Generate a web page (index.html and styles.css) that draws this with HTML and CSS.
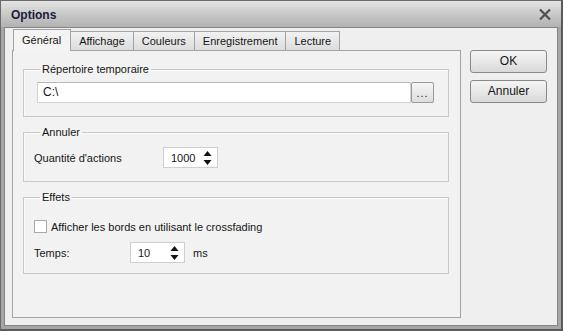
FILE: index.html
```html
<!DOCTYPE html>
<html>

<head>
    <meta charset="utf-8">
    <title>Options</title>

    <link rel="stylesheet" href="styles.css">
</head>

<body>

    <div class="window">
        <div class="titlebar">
            <span class="title">Options</span>
            <svg class="close" width="14" height="13" viewBox="0 0 14 13">
                <path d="M2 1.5 L12 11.5 M12 1.5 L2 11.5" stroke="#505050" stroke-width="2.2" fill="none" />
            </svg>
        </div>

        <div class="client">
            <div class="tabs-area">
                <div class="tabstrip">
                    <div class="tab active">Général</div>
                    <div class="tab">Affichage</div>
                    <div class="tab">Couleurs</div>
                    <div class="tab">Enregistrement</div>
                    <div class="tab">Lecture</div>
                </div>

                <div class="panel">
                    <fieldset class="group group-dir">
                        <legend>Répertoire temporaire</legend>
                        <div class="path-row">
                            <div class="path">C:\</div>
                            <div class="browse">...</div>
                        </div>
                    </fieldset>

                    <fieldset class="group group-undo">
                        <legend>Annuler</legend>
                        <div class="row">
                            <span class="label label-wide">Quantité d'actions</span>
                            <div class="spin">
                                <span class="spin-value">1000</span>
                                <svg class="spin-arrows" width="9" height="16" viewBox="0 0 9 16">
                                    <path d="M4.5 1 L8.5 6 L0.5 6 Z M0.5 10 L8.5 10 L4.5 15 Z" fill="#111" />
                                </svg>
                            </div>
                        </div>
                    </fieldset>

                    <fieldset class="group group-fx">
                        <legend>Effets</legend>
                        <div class="check-row">
                            <span class="checkbox"></span>
                            <span>Afficher les bords en utilisant le crossfading</span>
                        </div>
                        <div class="row">
                            <span class="label label-short">Temps:</span>
                            <div class="spin">
                                <span class="spin-value">10</span>
                                <svg class="spin-arrows" width="9" height="16" viewBox="0 0 9 16">
                                    <path d="M4.5 1 L8.5 6 L0.5 6 Z M0.5 10 L8.5 10 L4.5 15 Z" fill="#111" />
                                </svg>
                            </div>
                            <span class="unit">ms</span>
                        </div>
                    </fieldset>
                </div>
            </div>

            <div class="side">
                <div class="btn">OK</div>
                <div class="btn">Annuler</div>
            </div>
        </div>
    </div>

</body>

</html>
```

FILE: styles.css
```css
body {
    margin: 0;
    font-family: "Liberation Sans", Arial, sans-serif;
    font-size: 11px;
    color: #161616;
}

.window {
    width: 563px;
    height: 331px;
    box-sizing: border-box;
    display: flex;
    flex-direction: column;
    background: #a6a6a6;
    border: 1px solid #6a6a6a;
    border-bottom: 2px solid #5a5a5a;
    border-right: 2px solid #5a5a5a;
    padding: 0 3px 3px 3px;
}

.titlebar {
    height: 26px;
    margin: 0 -3px;
    padding: 0 9px 0 10px;
    display: flex;
    align-items: center;
    justify-content: space-between;
    background: linear-gradient(#e4e4e4, #c4c4c4 60%, #b2b2b2);
}

.title {
    font-weight: bold;
    font-size: 12px;
    color: #1b1b3a;
    margin-top: 1px;
}

.close {
    margin-top: 1px;
}

.client {
    flex: 1;
    display: flex;
    gap: 9px;
    background: #efefef;
    border: 1px solid #858585;
    padding: 1px 0 7px 7px;
}

.tabs-area {
    width: 449px;
    display: flex;
    flex-direction: column;
}

.tabstrip {
    display: flex;
    height: 21px;
    padding-left: 1px;
    align-items: flex-end;
}

.tab {
    height: 19px;
    box-sizing: border-box;
    padding: 0 8px;
    line-height: 18px;
    border: 1px solid #a3a3a3;
    border-bottom: none;
    border-left: none;
    background: linear-gradient(#f2f2f2, #dcdcdc);
}

.tab.active {
    height: 22px;
    margin-bottom: -1px;
    border-left: 1px solid #a3a3a3;
    background: #f4f4f4;
    line-height: 20px;
    padding: 0 9px 0 8px;
    position: relative;
}

.panel {
    flex: 1;
    border: 1px solid #a3a3a3;
    background: #f2f2f2;
    padding: 12px 11px 0 10px;
    display: flex;
    flex-direction: column;
    gap: 9px;
}

.group {
    margin: 0;
    border: 1px solid #c8c8c8;
    box-shadow: inset 1px 1px #fafafa;
    padding: 6px 14px 13px 10px;
}

.group legend {
    padding: 0 2px;
    margin-left: 6px;
    line-height: 13px;
}

.path-row {
    display: flex;
    margin-left: 3px;
}

.path {
    flex: 1;
    height: 21px;
    box-sizing: border-box;
    background: #fff;
    border: 1px solid #d2d2d2;
    border-top-color: #b8b8b8;
    padding-left: 5px;
    line-height: 19px;
    font-size: 12px;
}

.browse {
    width: 23px;
    height: 21px;
    box-sizing: border-box;
    border: 1px solid #9a9a9a;
    border-radius: 2px;
    background: linear-gradient(#f5f5f5, #dedede);
    text-align: center;
    line-height: 20px;
    letter-spacing: 1px;
}

.group-undo {
    padding: 8px 10px 13px 10px;
}

.group-fx {
    padding: 16px 10px 10px 10px;
}

.row {
    display: flex;
    align-items: center;
}

.label-wide {
    width: 129px;
}

.label-short {
    width: 96px;
}

.spin {
    width: 55px;
    height: 21px;
    box-sizing: border-box;
    background: #fff;
    border: 1px solid #cfcfcf;
    display: flex;
    align-items: center;
    justify-content: space-between;
    padding: 0 5px 0 7px;
}

.unit {
    margin-left: 8px;
}

.check-row {
    display: flex;
    align-items: center;
    gap: 4px;
    height: 13px;
    margin-bottom: 9px;
}

.checkbox {
    width: 13px;
    height: 13px;
    box-sizing: border-box;
    border: 1px solid #a8a8a8;
    background: #fff;
}

.side {
    display: flex;
    flex-direction: column;
    gap: 7px;
    padding-top: 21px;
}

.btn {
    width: 77px;
    height: 23px;
    box-sizing: border-box;
    border: 1px solid #8a8a8a;
    border-radius: 3px;
    background: linear-gradient(#f4f4f4, #e8e8e8 50%, #d9d9d9);
    text-align: center;
    line-height: 21px;
    font-size: 12px;
}
```
